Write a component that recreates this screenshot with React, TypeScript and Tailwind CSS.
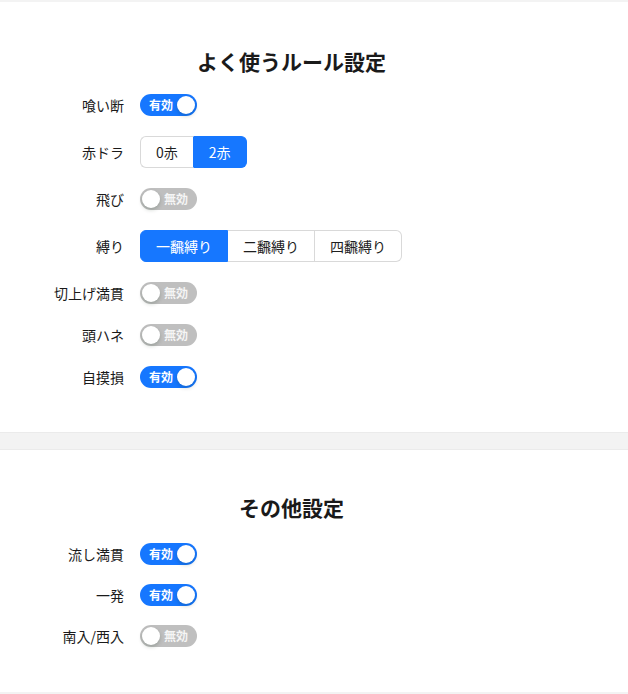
import React from "react";

const FONT = { fontFamily: '"Noto Sans CJK JP", "Noto Sans", sans-serif' };

function Toggle({ on }: { on: boolean }) {
  if (on) {
    return (
      <div className="relative flex h-[22px] w-[57px] items-center rounded-full bg-[#1677ff]">
        <span className="pl-[9px] text-[12px] font-bold leading-[22px] text-white">有効</span>
        <span className="absolute left-[37px] top-[2px] h-[18px] w-[18px] rounded-full bg-white shadow-[0_2px_4px_0_rgba(0,35,11,0.2)]" />
      </div>
    );
  }
  return (
    <div className="relative flex h-[22px] w-[57px] items-center rounded-full bg-[#bfbfbf]">
      <span className="pl-[24px] text-[12px] font-bold leading-[22px] text-[#f5f5f5]">無効</span>
      <span className="absolute left-[2px] top-[2px] h-[18px] w-[18px] rounded-full bg-white shadow-[0_2px_4px_0_rgba(0,35,11,0.2)]" />
    </div>
  );
}

function Segmented({ options, selected }: { options: string[]; selected: number }) {
  return (
    <div className="flex h-[32px]">
      {options.map((o, i) => {
        const first = i === 0;
        const last = i === options.length - 1;
        const sel = i === selected;
        const nextSel = i + 1 === selected;
        return (
          <div
            key={o}
            className={[
              "flex h-[32px] items-center border-y px-[15px] text-[14px]",
              first ? "rounded-l-[6px] border-l" : "",
              last ? "rounded-r-[6px] border-r" : "border-r",
              sel
                ? "border-[#1677ff] bg-[#1677ff] text-white"
                : "border-[#d9d9d9] bg-white text-[#1f1f1f]",
              !sel && nextSel ? "border-r-[#1677ff]" : "",
            ].join(" ")}
          >
            {o}
          </div>
        );
      })}
    </div>
  );
}

function Row({ label, children, className = "" }: { label: string; children: React.ReactNode; className?: string }) {
  return (
    <div className={"flex h-[32px] items-center gap-4 " + className}>
      <div className="w-[124px] text-right text-[14px] text-[#1a1a1a]">{label}</div>
      <div className="flex items-center">{children}</div>
    </div>
  );
}

export default function App() {
  return (
    <div className="min-h-[694px] bg-[#f3f3f3] pt-[2px] pb-[2px]" style={FONT}>
      <section className="h-[430px] bg-white pt-[43px]">
        <h2 className="w-[583px] text-center text-[21px] font-bold leading-[32px] text-[#1a1a1a]">
          よく使うルール設定
        </h2>
        <div className="mt-[12px] flex flex-col">
          <Row label="喰い断"><Toggle on /></Row>
          <Row label="赤ドラ" className="mt-[15px]"><Segmented options={["0赤", "2赤"]} selected={1} /></Row>
          <Row label="飛び" className="mt-[15px]"><Toggle on={false} /></Row>
          <Row label="縛り" className="mt-[15px]"><Segmented options={["一飜縛り", "二飜縛り", "四飜縛り"]} selected={0} /></Row>
          <Row label="切上げ満貫" className="mt-[15px]"><Toggle on={false} /></Row>
          <Row label="頭ハネ" className="mt-[10px]"><Toggle on={false} /></Row>
          <Row label="自摸損" className="mt-[10px]"><Toggle on /></Row>
        </div>
      </section>
      <div className="h-[18px] border-y border-[#ebebeb] bg-[#f3f3f3]" />
      <section className="h-[242px] bg-white pt-[41px]">
        <h2 className="w-[583px] text-center text-[21px] font-bold leading-[32px] text-[#1a1a1a]">
          その他設定
        </h2>
        <div className="mt-[15px] flex flex-col">
          <Row label="流し満貫"><Toggle on /></Row>
          <Row label="一発" className="mt-[9px]"><Toggle on /></Row>
          <Row label="南入/西入" className="mt-[9px]"><Toggle on={false} /></Row>
        </div>
      </section>
    </div>
  );
}
